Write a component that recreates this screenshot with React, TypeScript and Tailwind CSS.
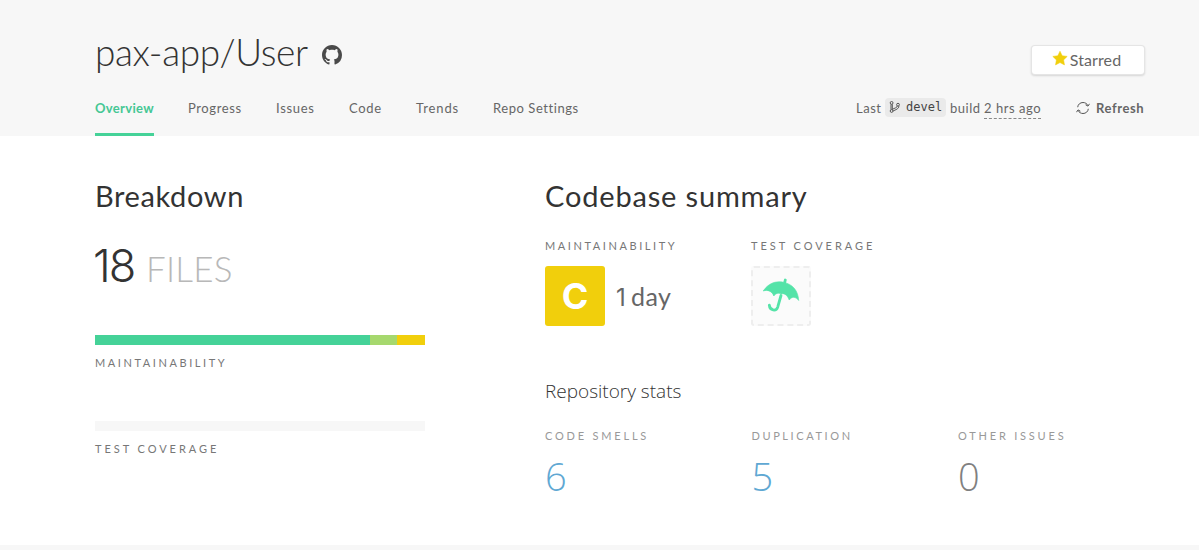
import React from "react";

const tabs = [
  { label: "Progress", box: "w-[54px]", track: "tracking-[0.6px]" },
  { label: "Issues", box: "w-[39px]", track: "tracking-[0.7px]" },
  { label: "Code", box: "w-[33px]", track: "tracking-[0.7px]" },
  { label: "Trends", box: "w-[43px]", track: "tracking-[0.9px]" },
  { label: "Repo Settings", box: "w-[86px]", track: "tracking-[0.56px]" },
];

const stats = [
  { label: "CODE SMELLS", value: "6", color: "text-[#5fa8d3]", track: "tracking-[2.8px]" },
  { label: "DUPLICATION", value: "5", color: "text-[#5fa8d3]", track: "tracking-[2.6px]" },
  { label: "OTHER ISSUES", value: "0", color: "text-[#808080]", track: "tracking-[2.8px]" },
];

function GithubMark() {
  return (
    <svg width="20" height="20" viewBox="0 0 16 16" fill="#4a4a4a">
      <path d="M8 0C3.58 0 0 3.58 0 8c0 3.54 2.29 6.53 5.47 7.59.4.07.55-.17.55-.38 0-.19-.01-.82-.01-1.49-2.01.37-2.53-.49-2.69-.94-.09-.23-.48-.94-.82-1.13-.28-.15-.68-.52-.01-.53.63-.01 1.08.58 1.23.82.72 1.21 1.87.87 2.33.66.07-.52.28-.87.51-1.07-1.78-.2-3.64-.89-3.64-3.95 0-.87.31-1.59.82-2.15-.08-.2-.36-1.02.08-2.12 0 0 .67-.21 2.2.82.64-.18 1.32-.27 2-.27s1.36.09 2 .27c1.53-1.04 2.2-.82 2.2-.82.44 1.1.16 1.92.08 2.12.51.56.82 1.27.82 2.15 0 3.07-1.87 3.75-3.65 3.95.29.25.54.73.54 1.48 0 1.07-.01 1.93-.01 2.2 0 .21.15.46.55.38A8.01 8.01 0 0 0 16 8c0-4.42-3.58-8-8-8z" />
    </svg>
  );
}

function Star() {
  return (
    <svg width="16" height="16" viewBox="0 0 16 16" fill="#f1cf0c">
      <path d="M8 1.200l2.200 4.500 5 .7-3.600 3.500.9 5L8 12.600l-4.500 2.300.9-5L.8 6.400l5-.7z" stroke="#f1cf0c" strokeWidth=".5" strokeLinejoin="round" />
    </svg>
  );
}

function Branch() {
  return (
    <svg width="12" height="12" viewBox="0 0 12 12" fill="none" stroke="#555" strokeWidth="1">
      <circle cx="2.6" cy="1.9" r="1.4" />
      <circle cx="2.6" cy="10" r="1.4" />
      <circle cx="9" cy="3.7" r="1.4" />
      <path d="M2 3.3v5.3M3.3 3.3v5.3M9.900 5.100c0 2.800-3.300 3.600-6 5M8.200 5.100c0 1.600-2.600 1.900-4.900 3.300" />
    </svg>
  );
}

function RefreshIcon() {
  return (
    <svg width="14" height="14" viewBox="0 0 14 14" fill="none" stroke="#555" strokeWidth="1">
      <path d="M1.700 6.200C1.900 3.400 4.200 1.500 7 1.500c2.100 0 3.900 1.100 4.800 2.900M12.300 7.800C12.100 10.600 9.800 12.500 7 12.500c-2.100 0-3.900-1.100-4.800-2.900" />
      <path d="M13.500 2.800l-1.500 2.300-2.400-1.300M.500 11.200l1.500-2.300 2.400 1.300" />
    </svg>
  );
}

function Umbrella() {
  return (
    <svg width="60" height="60" viewBox="0 0 60 60">
      <path
        d="M12.200 25C17.500 17.200 24.500 14.700 32.300 16.200C41.500 18 47.200 24.500 47.700 34.500C44.500 30.600 41.200 30.200 38.200 34C36.500 29 32.800 26.800 30.500 28C27.500 26.700 25 27 22.800 30C21.300 25.500 17 23.300 12.200 25Z"
        fill="#54e3a8"
        stroke="#54e3a8"
        strokeWidth=".6"
        strokeLinejoin="round"
      />
      <path d="M33.700 16.500L34.300 14" stroke="#54e3a8" strokeWidth="2.800" strokeLinecap="round" />
      <path d="M30 29.500L26.700 41.100C25.300 45.600 18.800 44.900 18.300 39.200" fill="none" stroke="#54e3a8" strokeWidth="2.800" strokeLinecap="round" />
    </svg>
  );
}

const label = "whitespace-nowrap text-[11px] leading-4";

export default function App() {
  return (
    <div className="flex h-[550px] w-[1199px] flex-col overflow-hidden bg-white font-['Lato',sans-serif] text-[#333]">
      <header className="flex h-[136px] shrink-0 flex-col justify-between bg-[#f7f7f7] pr-[54px] pl-[95px]">
        <div className="flex h-[92px] items-start justify-between">
          <div className="flex pt-[28px]">
            <h1 className="w-[227px] pt-px text-[37px] leading-[46px] font-light tracking-[-0.4px] whitespace-nowrap">pax-app/User</h1>
            <span className="pt-[17px]"><GithubMark /></span>
          </div>
          <button className="mt-[46px] mr-px flex h-[28px] w-[112px] justify-center rounded-[3px] bg-white pt-[3px] pr-[3px] text-base leading-[22px] text-[#666] shadow-[0_0_0_1px_#e5e5e5,0_1px_2px_1px_#d6d6d6]">
            <span className="mr-[2px] pt-px"><Star /></span>
            <span className="tracking-[0.1px]">Starred</span>
          </button>
        </div>
        <div className="flex h-[44px] justify-between text-[13px] leading-[18px] text-[#666]">
          <nav className="flex gap-[34px]">
            <a className="w-[59px] border-b-[3px] border-[#45d298] pt-[7px] font-bold tracking-[0.32px] whitespace-nowrap text-[#45c794]">Overview</a>
            {tabs.map((t) => (
              <a key={t.label} className={`pt-[7px] whitespace-nowrap ${t.box} ${t.track}`}>{t.label}</a>
            ))}
          </nav>
          <div className="flex items-start whitespace-nowrap">
            <span className="w-[29px] pt-[7px] tracking-[0.5px]">Last</span>
            <span className="mt-[6px] flex h-[19px] w-[61px] items-center gap-[5px] rounded-[4px] bg-[#eaeaea] pb-px pl-1 font-['DejaVu_Sans_Mono',monospace] text-[12px] text-[#444]">
              <Branch /> devel
            </span>
            <span className="w-[38px] pt-[7px] pl-1 tracking-[0.5px]">build</span>
            <span className="mt-[7px] h-[20px] w-[57px] border-b border-dashed border-[#888] tracking-[0.55px]">2 hrs ago</span>
            <span className="ml-[35px] pt-[9px]"><RefreshIcon /></span>
            <span className="ml-[6px] w-[49px] pt-[7px] font-bold tracking-[0.6px]">Refresh</span>
          </div>
        </div>
      </header>
      <main className="flex grow pl-[95px]">
        <section className="w-[450px]">
          <h2 className="mt-[42px] text-[29px] leading-9 tracking-[0.6px]">Breakdown</h2>
          <div className="mt-[23px] flex h-[59px] items-baseline leading-[58px] whitespace-nowrap">
            <span className="-ml-[2px] w-[53px] font-['Inter',sans-serif] text-[45px] font-light tracking-[-2px]">18</span>
            <span className="text-[35px] font-light tracking-[0.2px] text-[#b8b8b8]">FILES</span>
          </div>
          <div className="mt-[39px] flex h-[10px] w-[330px]">
            <div className="w-[275px] bg-[#45d298]" />
            <div className="w-[27px] bg-[#a6d86e]" />
            <div className="w-[28px] bg-[#f1cf0c]" />
          </div>
          <div className={`${label} mt-[10px] tracking-[2.58px] text-[#777]`}>MAINTAINABILITY</div>
          <div className="mt-[50px] h-[10px] w-[330px] bg-[#f7f7f7]" />
          <div className={`${label} mt-[10px] tracking-[2.95px] text-[#777]`}>TEST COVERAGE</div>
        </section>
        <section>
          <h2 className="mt-[42px] text-[29px] leading-9 tracking-[0.83px]">Codebase summary</h2>
          <div className="mt-[24px] flex">
            <div className="w-[206px]">
              <div className={`${label} tracking-[2.58px] text-[#777]`}>MAINTAINABILITY</div>
              <div className="mt-3 flex h-[60px]">
                <div className="flex h-[60px] w-[60px] items-center justify-center rounded-[3px] bg-[#f1cf0c] font-['Inter',sans-serif] text-[36px] leading-none font-bold text-white">C</div>
                <div className="ml-[11px] flex items-baseline text-[25px] leading-[60px] text-[#666]">
                  <span className="w-[15px] font-['Inter',sans-serif] text-[24px]">1</span>
                  <span className="tracking-[0.4px]">day</span>
                </div>
              </div>
            </div>
            <div>
              <div className={`${label} tracking-[2.95px] text-[#777]`}>TEST COVERAGE</div>
              <div className="relative mt-3 h-[60px] w-[60px] rounded-[3px] border-2 border-dashed border-[#eee] bg-[#fbfbfb]">
                <div className="absolute -top-[2px] -left-[2px]"><Umbrella /></div>
              </div>
            </div>
          </div>
          <h3 className="mt-[52px] font-['Open_Sans',sans-serif] text-[19px] leading-[26px] font-light">Repository stats</h3>
          <div className="mt-[24px] flex">
            {stats.map((s) => (
              <div key={s.label} className="w-[206.5px]">
                <div className={`${label} text-[#999] ${s.track}`}>{s.label}</div>
                <div className={`mt-[8px] font-['Open_Sans',sans-serif] text-[38px] leading-[48px] font-light ${s.color}`}>{s.value}</div>
              </div>
            ))}
          </div>
        </section>
      </main>
      <footer className="h-[5px] shrink-0 bg-[#f7f7f7]" />
    </div>
  );
}
